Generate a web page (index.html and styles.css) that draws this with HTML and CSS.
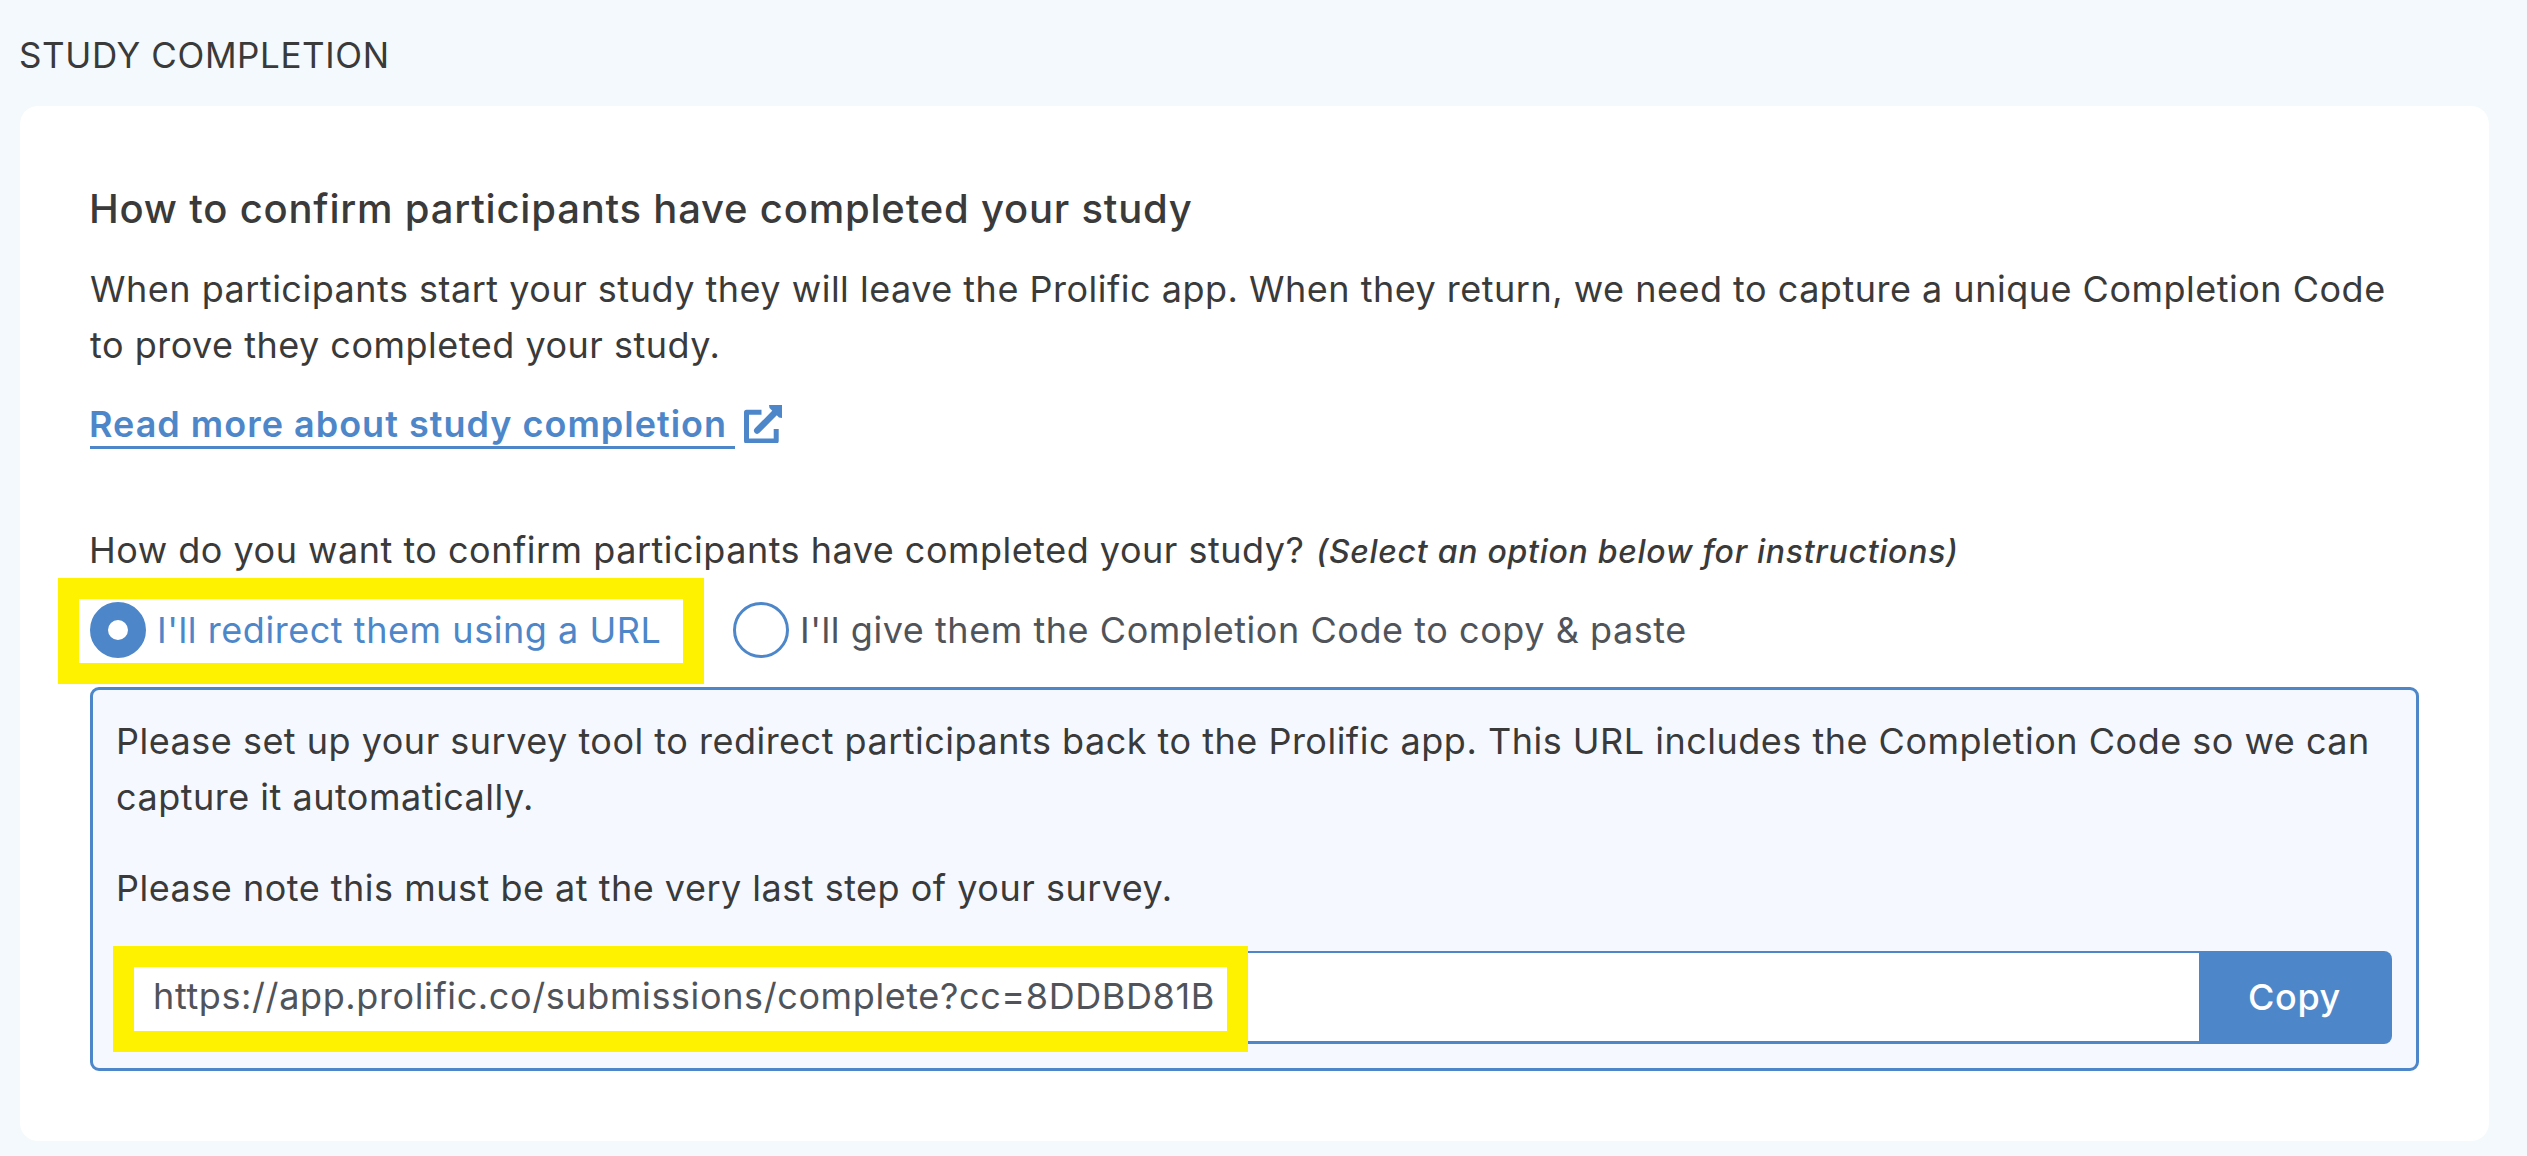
FILE: index.html
```html
<!DOCTYPE html>
<html lang="en">
<head>
<meta charset="utf-8">
<title>Study completion</title>
<link rel="stylesheet" href="styles.css">
</head>
<body>
<main class="page">
  <h2 class="section-title">STUDY COMPLETION</h2>
  <section class="card">
    <h3 class="heading">How to confirm participants have completed your study</h3>
    <p class="text intro">When participants start your study they will leave the Prolific app. When they return, we need to capture a unique Completion Code<br>to prove they completed your study.</p>
    <a class="more">
      <span class="more-label">Read more about study completion</span>
      <svg class="more-icon" width="38" height="38" viewBox="0 0 38 38" fill="none">
        <path d="M17.5 7.3H2.5V36H32.2V24" stroke="currentColor" stroke-width="5" stroke-linejoin="round"/>
        <path d="M13.2 25.6L31 7.5" stroke="currentColor" stroke-width="6.4" stroke-linecap="round"/>
        <path d="M25 0H38V13L35 12.5L25.5 3Z" fill="currentColor"/>
      </svg>
    </a>
    <p class="text question">How do you want to confirm participants have completed your study?<em class="hint">(Select an option below for instructions)</em></p>
    <div class="options">
      <label class="option selected"><span class="radio"></span><span class="option-label">I'll redirect them using a URL</span><span class="mark mark-option"></span></label>
      <label class="option"><span class="radio"></span><span class="option-label">I'll give them the Completion Code to copy &amp; paste</span></label>
    </div>
    <div class="panel">
      <p class="text">Please set up your survey tool to redirect participants back to the Prolific app. This URL includes the Completion Code so we can<br>capture it automatically.</p>
      <p class="text note">Please note this must be at the very last step of your survey.</p>
      <div class="copy-row">
        <div class="url">https://app.prolific.co/submissions/complete?cc=8DDBD81B</div>
        <button class="copy">Copy</button>
        <span class="mark mark-url"></span>
      </div>
    </div>
  </section>
</main>
</body>
</html>
```
FILE: styles.css
```css
* { box-sizing: border-box; }

body {
  margin: 0;
  background: #f3f9fc;
  color: #3a3a3a;
  font-family: Inter, sans-serif;
  font-size: 36px;
  line-height: 56px;
  letter-spacing: 0.5px;
  white-space: nowrap;
}

h2, h3, p { margin: 0; }

.page {
  height: 1156px;
  padding: 27px 38px 0 20px;
  overflow: hidden;
}

.section-title {
  font-size: 35px;
  font-weight: 400;
  letter-spacing: 0.6px;
  text-indent: -1px;
}

.card {
  height: 1035px;
  margin-top: 23px;
  padding: 73px 70px 0;
  border-radius: 18px;
  background: #fff;
}

.heading {
  margin-left: -1px;
  font-size: 40px;
  font-weight: 500;
  line-height: 60px;
  letter-spacing: 0.79px;
}

.intro { margin-top: 22px; }

.more {
  display: flex;
  align-items: flex-start;
  gap: 9px;
  margin-top: 27px;
  color: #4d87c9;
}

.more-label {
  width: 645px;
  padding-top: 2px;
  border-bottom: 3px solid;
  font-weight: 600;
  line-height: 44px;
  letter-spacing: 1px;
  text-indent: -1px;
}

.more-icon { margin-top: 5px; }

.question {
  height: 56px;
  margin-top: 73px;
  text-indent: -1px;
}

.hint {
  margin-left: 12px;
  font-size: 32px;
  font-weight: 500;
  line-height: 1;
  letter-spacing: 0.72px;
}

.options {
  display: flex;
  gap: 72px;
  margin-top: 24px;
}

.option {
  position: relative;
  display: flex;
  gap: 11px;
  width: 571px;
  color: #50545a;
  letter-spacing: 0.55px;
}

.option.selected { color: #4d87c9; }

.radio {
  width: 56px;
  height: 56px;
  border: 3px solid #4d87c9;
  border-radius: 50%;
}

.selected .radio { border-width: 18px; }

.radio, .mark { flex-shrink: 0; }

.mark {
  position: absolute;
  border: 21px solid #fff200;
}

.mark-option {
  left: -32px;
  top: -24px;
  width: 646px;
  height: 106px;
}

.panel {
  height: 384px;
  margin-top: 29px;
  padding: 23px 24px 0 23px;
  border: 3px solid #4d87c9;
  border-radius: 9px;
  background: #f5f9ff;
}

.note { margin-top: 35px; }

.copy-row {
  position: relative;
  display: flex;
  height: 93px;
  margin-top: 35px;
}

.url {
  flex: 1;
  padding: 15px 0 0 34px;
  border: solid #4d87c9;
  border-width: 2px 0 3px 3px;
  border-radius: 8px 0 0 8px;
  background: #fff;
  color: #50545a;
  letter-spacing: 0.61px;
}

.copy {
  width: 193px;
  padding: 0 2px 2px 0;
  border: 0;
  border-radius: 0 8px 8px 0;
  background: #4d87c9;
  color: #fff;
  font: 500 36px/56px Inter, sans-serif;
  letter-spacing: 0.6px;
}

.mark-url {
  left: -3px;
  top: -5px;
  width: 1135px;
  height: 106px;
}
```
